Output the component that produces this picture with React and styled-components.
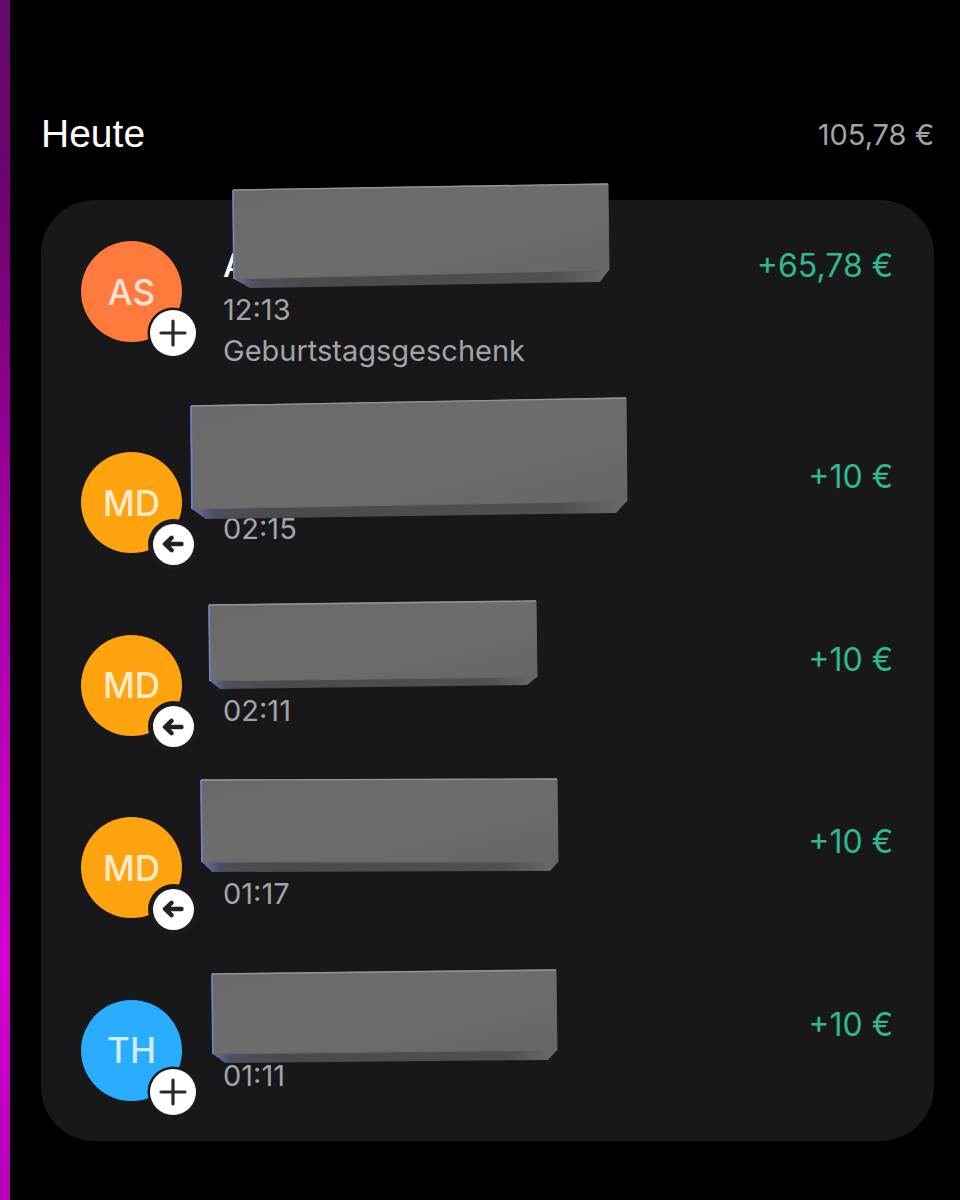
import React from "react";
import styled, { createGlobalStyle } from "styled-components";

const Global = createGlobalStyle`
  html, body { margin: 0; padding: 0; background: #000; }
  body { font-family: Inter, "Liberation Sans", sans-serif; }
`;

const Page = styled.div`
  position: relative;
  display: flex;
  width: 960px;
  height: 1200px;
  overflow: hidden;
  background: #000;
`;
const SideBar = styled.div`
  flex: 0 0 10px;
  background: linear-gradient(180deg, #650a6b 0%, #6e0070 16%, #a800a8 50%, #d400d0 80%, #b400b8 100%);
`;
const Main = styled.main`
  flex: 1;
  padding: 114px 26px 0 31px;
  display: flex;
  flex-direction: column;
`;
const Header = styled.header`
  display: flex;
  justify-content: space-between;
  align-items: center;
  height: 40px;
  margin-bottom: 46px;
`;
const Title = styled.h1`
  margin: 0;
  font-family: "Liberation Sans", Arial, sans-serif;
  font-size: 39px;
  font-weight: 400;
  color: #fff;
`;
const Total = styled.span`
  font-size: 29px;
  color: #a3a3a5;
`;
const Card = styled.section`
  display: flex;
  flex-direction: column;
  gap: 81.5px;
  padding: 41px 41px 40.5px 40px;
  background: #18181b;
  border-radius: 54px;
`;
const Row = styled.article`
  display: flex;
  align-items: flex-start;
`;
const AvatarWrap = styled.div`
  position: relative;
  flex: 0 0 101px;
  height: 101px;
  margin-right: 42px;
`;
const Avatar = styled.div`
  width: 101px;
  height: 101px;
  border-radius: 50%;
  background: ${(p) => p.$bg};
  display: flex;
  align-items: center;
  justify-content: center;
  color: rgba(255, 255, 255, 0.78);
  font-size: 35px;
  font-weight: 500;
`;
const Badge = styled.div`
  position: absolute;
  right: ${(p) => (p.$kind === "plus" ? "-14px" : "-11.5px")};
  bottom: ${(p) => (p.$kind === "plus" ? "-14px" : "-11.5px")};
  width: ${(p) => (p.$kind === "plus" ? "46px" : "41px")};
  height: ${(p) => (p.$kind === "plus" ? "46px" : "41px")};
  border-radius: 50%;
  background: #fff;
  box-shadow: 0 0 0 ${(p) => (p.$kind === "plus" ? "2.5px" : "5px")} #1b1b1f;
  display: flex;
  align-items: center;
  justify-content: center;
`;
const Info = styled.div`
  flex: 1;
  padding-top: 4px;
  margin-left: -1px;
`;
const Name = styled.div`
  height: ${(p) => (p.$tall ? "51.5px" : "44px")};
  line-height: 40px;
  font-size: 33px;
  font-weight: 500;
  color: #fff;
`;
const Line = styled.div`
  line-height: 41px;
  font-size: 29px;
  color: #a3a3a5;
  &:last-child {
    height: 40.5px;
  }
`;
const Amount = styled.div`
  padding-top: 5px;
  line-height: 40px;
  font-size: 32px;
  color: #2fb98c;
`;
const Redaction = styled.svg`
  position: absolute;
  left: 0;
  top: 0;
  width: 960px;
  height: 1200px;
  pointer-events: none;
`;

const PlusIcon = () => (
  <svg width="28" height="28" viewBox="0 0 28 28" fill="none" stroke="#2a2a2e" strokeWidth="3.2" strokeLinecap="round">
    <path d="M14 2v24M2 14h24" />
  </svg>
);
const ArrowIcon = () => (
  <svg width="22" height="18" viewBox="0 0 22 18" fill="none" stroke="#222226" strokeWidth="4.4" strokeLinecap="round" strokeLinejoin="round">
    <path d="M19.5 9H4M9.5 2.8 3 9l6.5 6.2" />
  </svg>
);

const rows = [
  { initials: "AS", bg: "#ff7a3c", kind: "plus", name: "A", time: "12:13", note: "Geburtstagsgeschenk", amount: "+65,78 €" },
  { initials: "MD", bg: "#ffa30f", kind: "arrow", time: "02:15", amount: "+10 €" },
  { initials: "MD", bg: "#ffa30f", kind: "arrow", time: "02:11", amount: "+10 €" },
  { initials: "MD", bg: "#ffa30f", kind: "arrow", time: "01:17", amount: "+10 €" },
  { initials: "TH", bg: "#2aadff", kind: "plus", time: "01:11", amount: "+10 €" },
];

const blocks = [
  { tl: [233, 190], tr: [608, 184], br: [609, 270], bl: [234, 279], sbl: [250, 288], sbr: [600, 282] },
  { tl: [191, 406], tr: [626, 398], br: [627, 501], bl: [192, 509], sbl: [206, 519], sbr: [616, 513] },
  { tl: [209, 605], tr: [536, 601], br: [537, 677], bl: [210, 681], sbl: [220, 689], sbr: [527, 685] },
  { tl: [201, 780], tr: [557, 779], br: [558, 862], bl: [202, 862], sbl: [212, 872], sbr: [550, 871] },
  { tl: [212, 974], tr: [556, 970], br: [557, 1050], bl: [213, 1054], sbl: [225, 1063], sbr: [548, 1060] },
];
const pts = (...p) => p.map((q) => q.join(",")).join(" ");

export default function App() {
  return (
    <Page>
      <Global />
      <SideBar />
      <Main>
        <Header>
          <Title>Heute</Title>
          <Total>105,78 €</Total>
        </Header>
        <Card>
          {rows.map((r, i) => (
            <Row key={i}>
              <AvatarWrap>
                <Avatar $bg={r.bg}>{r.initials}</Avatar>
                <Badge $kind={r.kind}>{r.kind === "plus" ? <PlusIcon /> : <ArrowIcon />}</Badge>
              </AvatarWrap>
              <Info>
                <Name $tall={!r.note}>{r.name}</Name>
                <Line>{r.time}</Line>
                {r.note && <Line>{r.note}</Line>}
              </Info>
              <Amount>{r.amount}</Amount>
            </Row>
          ))}
        </Card>
      </Main>
      <Redaction viewBox="0 0 960 1200">
        <defs>
          <linearGradient id="face" x1="0" y1="0" x2="1" y2="1">
            <stop offset="0" stopColor="#69696b" />
            <stop offset="0.5" stopColor="#6d6d6d" />
            <stop offset="1" stopColor="#666667" />
          </linearGradient>
          <linearGradient id="lip" x1="0" y1="0" x2="1" y2="0">
            <stop offset="0" stopColor="#6673ad" />
            <stop offset="0.05" stopColor="#4d4f5c" />
            <stop offset="0.2" stopColor="#4a4a4c" />
            <stop offset="0.85" stopColor="#505052" />
            <stop offset="1" stopColor="#6a6a6c" />
          </linearGradient>
        </defs>
        {blocks.map((b, i) => (
          <g key={i}>
            <polygon points={pts(b.bl, b.br, b.sbr, b.sbl)} fill="url(#lip)" />
            <polygon points={pts(b.tl, b.tr, b.br, b.bl)} fill="url(#face)" stroke="#68686a" strokeWidth="1" strokeLinejoin="round" />
            <polyline points={pts(b.tl, b.tr)} fill="none" stroke="#94969f" strokeWidth="1.4" />
            <polyline points={pts(b.bl, b.tl)} fill="none" stroke="#6f80c4" strokeWidth="1.8" />
          </g>
        ))}
      </Redaction>
    </Page>
  );
}
